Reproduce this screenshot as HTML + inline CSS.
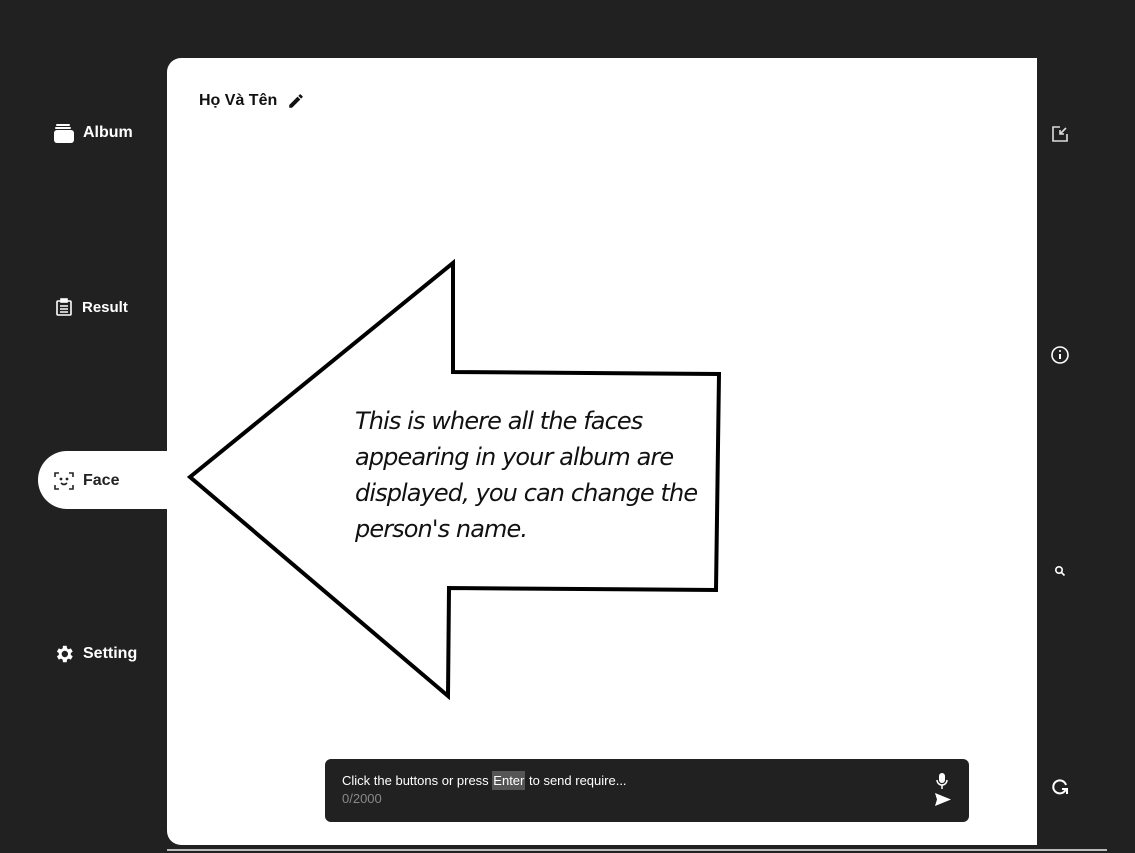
<!DOCTYPE html>
<html><head><meta charset="utf-8"><style>
*{margin:0;padding:0;box-sizing:border-box}
body{width:1135px;height:853px;background:#212121;position:relative;overflow:hidden;font-family:"Liberation Sans",sans-serif}
.panel{position:absolute;left:167px;top:58px;width:870px;height:787px;background:#fff;border-radius:14px 0 0 14px}
.nav{position:absolute;color:#fff;font-weight:bold;font-size:16px;display:flex;align-items:center;gap:8px}
.face{position:absolute;left:38px;top:451px;width:140px;height:58px;background:#fff;border-radius:29px 0 0 29px}
.name{position:absolute;left:199px;top:92px;font-size:16px;font-weight:bold;color:#111;display:flex;align-items:center;gap:10px}
.input{position:absolute;left:325px;top:759px;width:644px;height:63px;background:#212121;border-radius:6px;color:#fff;font-size:13px}
.txt{position:absolute;left:355px;top:403px;font-size:24px;font-style:italic;line-height:36px;color:#111;font-family:"DejaVu Sans","Liberation Sans",sans-serif;letter-spacing:-0.9px}
</style></head><body>
<div class="panel"></div>
<div class="face"></div>
<div class="nav" style="left:53px;top:122px"><svg width="22" height="22" viewBox="0 0 22 22"><rect x="3" y="2" width="14" height="2" rx="1" fill="#fff"/><rect x="2" y="5" width="16" height="2" rx="1" fill="#fff"/><rect x="1" y="8" width="20" height="13" rx="3" fill="#fff"/></svg>Album</div>
<div class="nav" style="left:54px;top:297px;font-size:15px"><svg width="20" height="20" viewBox="0 0 20 20" fill="none" stroke="#fff" stroke-width="1.6"><rect x="3" y="4" width="14" height="14" rx="1"/><rect x="7" y="2" width="6" height="3" fill="#fff"/><path d="M6 9h8M6 12h8M6 15h8"/></svg>Result</div>
<div class="nav" style="left:53px;top:470px;color:#222;font-size:16px"><svg width="22" height="22" viewBox="0 0 22 22" fill="none" stroke="#222" stroke-width="1.6"><path d="M2 7V3h4M16 3h4v4M20 15v4h-4M6 19H2v-4"/><path d="M8 13q3 3 6 0"/><circle cx="8" cy="9" r=".6" fill="#222"/><circle cx="14" cy="9" r=".6" fill="#222"/></svg>Face</div>
<div class="nav" style="left:53px;top:643px"><svg width="22" height="22" viewBox="0 0 24 24"><path fill="#fff" d="M19.4 13a7.5 7.5 0 000-2l2.1-1.6-2-3.5-2.5 1a7 7 0 00-1.7-1L14.9 3h-4l-.4 2.9a7 7 0 00-1.7 1l-2.5-1-2 3.5L6.4 11a7.5 7.5 0 000 2l-2.1 1.6 2 3.5 2.5-1a7 7 0 001.7 1l.4 2.9h4l.4-2.9a7 7 0 001.7-1l2.5 1 2-3.5zM12.9 15.5a3.5 3.5 0 110-7 3.5 3.5 0 010 7z"/></svg>Setting</div>
<div class="name">Họ Và Tên <svg width="18" height="18" viewBox="0 0 24 24"><path fill="#111" d="M3 17.25V21h3.75L17.8 9.94l-3.75-3.75zM20.7 7.04a1 1 0 000-1.41l-2.34-2.34a1 1 0 00-1.41 0l-1.83 1.830 3.75 3.75z"/></svg></div>
<svg style="position:absolute;left:0;top:0" width="1135" height="853"><polygon points="190,477 453,263 453,372 719,374 716,590 449,588 448,696" fill="#fff" stroke="#000" stroke-width="4"/></svg>
<div class="txt">This is where all the faces<br>appearing in your album are<br>displayed, you can change the<br>person's name.</div>
<div class="input"><div style="position:absolute;left:17px;top:14px">Click the buttons or press <span style="background:#555;padding:2px 1px">Enter</span> to send require...</div><div style="position:absolute;left:17px;top:32px;color:#888">0/2000</div>
<svg style="position:absolute;left:610px;top:13px" width="14" height="18" viewBox="0 0 14 18"><rect x="4" y="1" width="6" height="10" rx="3" fill="#fff"/><path d="M2 8a5 5 0 0010 0M7 13v4" stroke="#fff" stroke-width="1.5" fill="none"/></svg>
<svg style="position:absolute;left:609px;top:33px" width="18" height="15" viewBox="0 0 18 15"><path d="M1 1l16 6.5L1 14l2-6.5z" fill="#fff"/></svg></div>
<svg style="position:absolute;left:1051px;top:125px" width="18" height="18" viewBox="0 0 18 18" fill="none" stroke="#ddd" stroke-width="1.6"><path d="M9 2H2v14h14V9M9 9l6-6M9 5v4h4"/></svg>
<svg style="position:absolute;left:1050px;top:345px" width="20" height="20" viewBox="0 0 20 20" fill="none" stroke="#fff" stroke-width="1.6"><circle cx="10" cy="10" r="8"/><path d="M10 9v5" stroke-width="2"/><circle cx="10" cy="6" r="1" fill="#fff" stroke="none"/></svg>
<svg style="position:absolute;left:1054px;top:565px" width="12" height="12" viewBox="0 0 12 12" fill="none" stroke="#fff" stroke-width="1.6"><circle cx="5" cy="5" r="3.2"/><path d="M7.5 7.5l3 3"/></svg>
<svg style="position:absolute;left:1050px;top:777px" width="20" height="20" viewBox="0 0 20 20" fill="none" stroke="#fff" stroke-width="2"><path d="M16 8a6.5 6.5 0 10-.5 5"/><path d="M12 12h5v5" fill="none"/></svg>
<div style="position:absolute;left:167px;top:849px;width:940px;height:2px;background:#bbb"></div>
</body></html>
